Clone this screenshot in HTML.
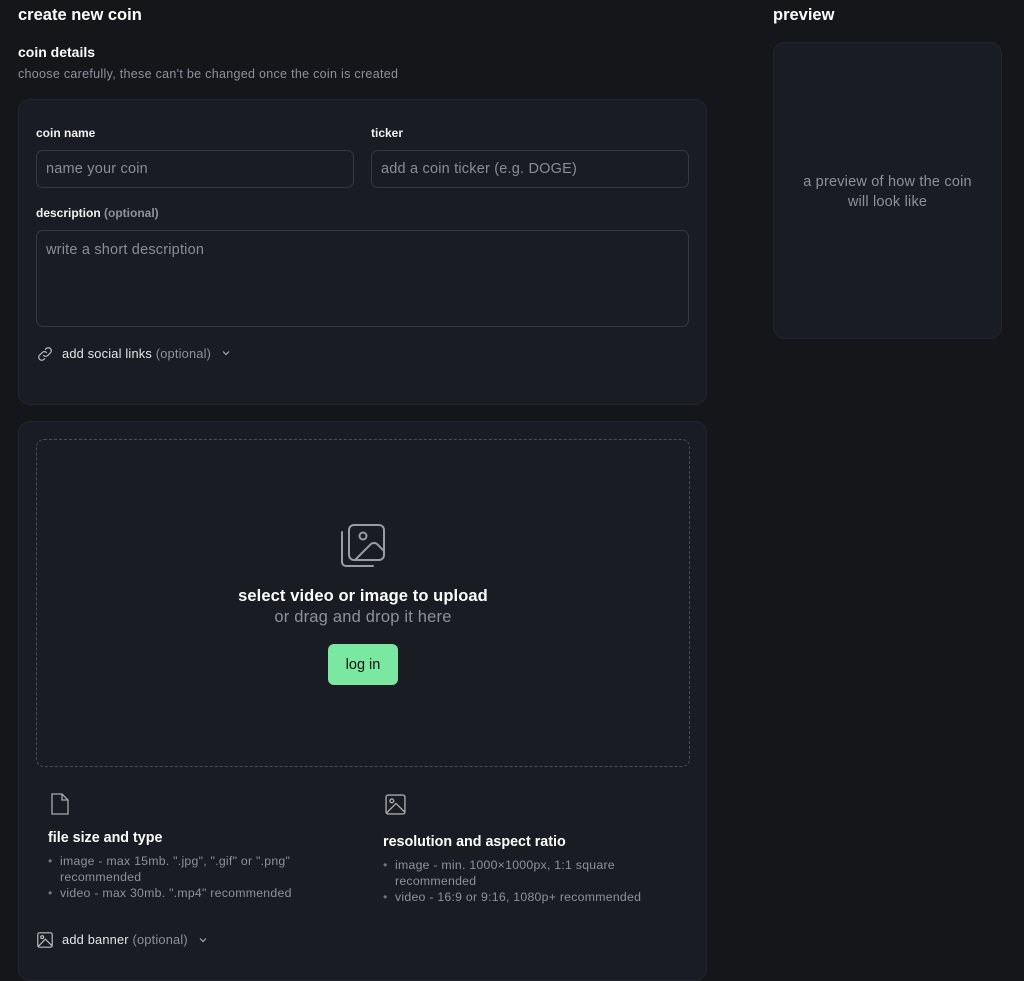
<!DOCTYPE html>
<html><head><meta charset="utf-8"><style>
*{box-sizing:border-box;margin:0;padding:0}
html,body{width:1024px;height:953px;overflow:hidden;background:#15161a;font-family:"Liberation Sans",sans-serif;color:#fff}
.abs{position:absolute}
.card{position:absolute;background:#1a1c23;border:1px solid #24262e;border-radius:12px}
.lbl{font-size:12px;font-weight:bold;color:#f2f2f2}
.inp{position:absolute;border:1px solid #353841;border-radius:7px;background:#1a1c23;color:#8a8d96;font-size:14.5px;letter-spacing:0.2px;padding:0 9px;display:flex;align-items:center}
.muted{color:#8e919a}
ul{list-style:none}
li{font-size:12.3px;letter-spacing:0.25px;color:#8e919a;line-height:16px;padding-left:12px;position:relative}
li:before{content:"•";position:absolute;left:0;color:#777}
</style></head><body>
<div class="abs" style="left:18px;top:6px;font-size:16.5px;font-weight:bold">create new coin</div>
<div class="abs" style="left:18px;top:44px;font-size:14px;font-weight:bold">coin details</div>
<div class="abs muted" style="left:18px;top:67px;font-size:12.5px;letter-spacing:0.3px">choose carefully, these can't be changed once the coin is created</div>

<div class="card" style="left:18px;top:99px;width:689px;height:306px"></div>
<div class="abs lbl" style="left:36px;top:126px">coin name</div>
<div class="abs lbl" style="left:371px;top:126px">ticker</div>
<div class="inp" style="left:36px;top:150px;width:318px;height:38px">name your coin</div>
<div class="inp" style="left:371px;top:150px;width:318px;height:38px">add a coin ticker (e.g. DOGE)</div>
<div class="abs lbl" style="left:36px;top:206px">description <span style="color:#8e919a">(optional)</span></div>
<div class="inp" style="left:36px;top:230px;width:653px;height:97px;align-items:flex-start;padding-top:11px">write a short description</div>
<svg class="abs" style="left:36px;top:345px" width="18" height="18" viewBox="0 0 24 24" fill="none" stroke="#bbb" stroke-width="1.6" stroke-linecap="round"><path d="M10 14a4 4 0 0 0 5.7 0l3.5-3.5a4 4 0 0 0-5.7-5.7l-1 1"/><path d="M14 10a4 4 0 0 0-5.7 0l-3.5 3.5a4 4 0 0 0 5.7 5.7l1-1"/></svg>
<div class="abs" style="left:62px;top:346px;font-size:12.8px;letter-spacing:0.2px;color:#e6e6e6">add social links <span class="muted">(optional)</span></div>
<svg class="abs" style="left:221px;top:348px" width="10" height="10" viewBox="0 0 10 10" fill="none" stroke="#aaa" stroke-width="1.2"><path d="M2 3.5l3 3 3-3"/></svg>

<div class="card" style="left:18px;top:421px;width:689px;height:560px"></div>
<div class="abs" style="left:36px;top:439px;width:654px;height:328px;border:1px dashed #4a4d56;border-radius:8px"></div>
<svg class="abs" style="left:339px;top:522px" width="48" height="48" viewBox="0 0 48 48" fill="none" stroke="#9a9ca3" stroke-width="2" stroke-linecap="round"><path d="M3 10v30a4 4 0 0 0 4 4h27"/><rect x="10" y="3" width="35" height="35" rx="5"/><circle cx="24" cy="14" r="3.5"/><path d="M17 37l14-14a5 5 0 0 1 8 0l6 6"/></svg>
<div class="abs" style="left:36px;top:587px;width:654px;text-align:center;font-size:16.5px;font-weight:bold;letter-spacing:0.1px">select video or image to upload</div>
<div class="abs muted" style="left:36px;top:608px;width:654px;text-align:center;font-size:16.5px;letter-spacing:0.2px">or drag and drop it here</div>
<div class="abs" style="left:328px;top:644px;width:70px;height:41px;background:#7ae8a0;border-radius:6px;color:#111;font-size:14.5px;display:flex;align-items:center;justify-content:center">log in</div>

<svg class="abs" style="left:50px;top:792px" width="20" height="24" viewBox="0 0 20 24" fill="none" stroke="#aaa" stroke-width="1.3"><path d="M2 2h10l6 6v14H2z"/><path d="M12 2v6h6"/></svg>
<div class="abs" style="left:48px;top:830px;font-size:14.3px;font-weight:bold">file size and type</div>
<ul class="abs" style="left:48px;top:853px;width:285px"><li>image - max 15mb. ".jpg", ".gif" or ".png" recommended</li><li>video - max 30mb. ".mp4" recommended</li></ul>
<svg class="abs" style="left:385px;top:794px" width="21" height="21" viewBox="0 0 20 20" fill="none" stroke="#aaa" stroke-width="1.3"><rect x="1" y="1" width="18" height="18" rx="2"/><circle cx="6.5" cy="6.5" r="1.8"/><path d="M1.5 18l9-9 8 8"/></svg>
<div class="abs" style="left:383px;top:834px;font-size:14.3px;font-weight:bold">resolution and aspect ratio</div>
<ul class="abs" style="left:383px;top:857px;width:280px"><li>image - min. 1000×1000px, 1:1 square recommended</li><li>video - 16:9 or 9:16, 1080p+ recommended</li></ul>
<svg class="abs" style="left:37px;top:932px" width="16" height="16" viewBox="0 0 20 20" fill="none" stroke="#bbb" stroke-width="1.5"><rect x="1" y="1" width="18" height="18" rx="2"/><circle cx="6.5" cy="6.5" r="1.8"/><path d="M1.5 18l9-9 8 8"/></svg>
<div class="abs" style="left:62px;top:932px;font-size:12.8px;letter-spacing:0.2px;color:#e6e6e6">add banner <span class="muted">(optional)</span></div>
<svg class="abs" style="left:198px;top:935px" width="10" height="10" viewBox="0 0 10 10" fill="none" stroke="#aaa" stroke-width="1.2"><path d="M2 3.5l3 3 3-3"/></svg>

<div class="abs" style="left:773px;top:6px;font-size:16.5px;font-weight:bold">preview</div>
<div class="card" style="left:773px;top:42px;width:229px;height:297px"></div>
<div class="abs muted" style="left:773px;top:172px;width:229px;text-align:center;font-size:14.5px;letter-spacing:0.2px;line-height:20px">a preview of how the coin<br>will look like</div>
</body></html>
